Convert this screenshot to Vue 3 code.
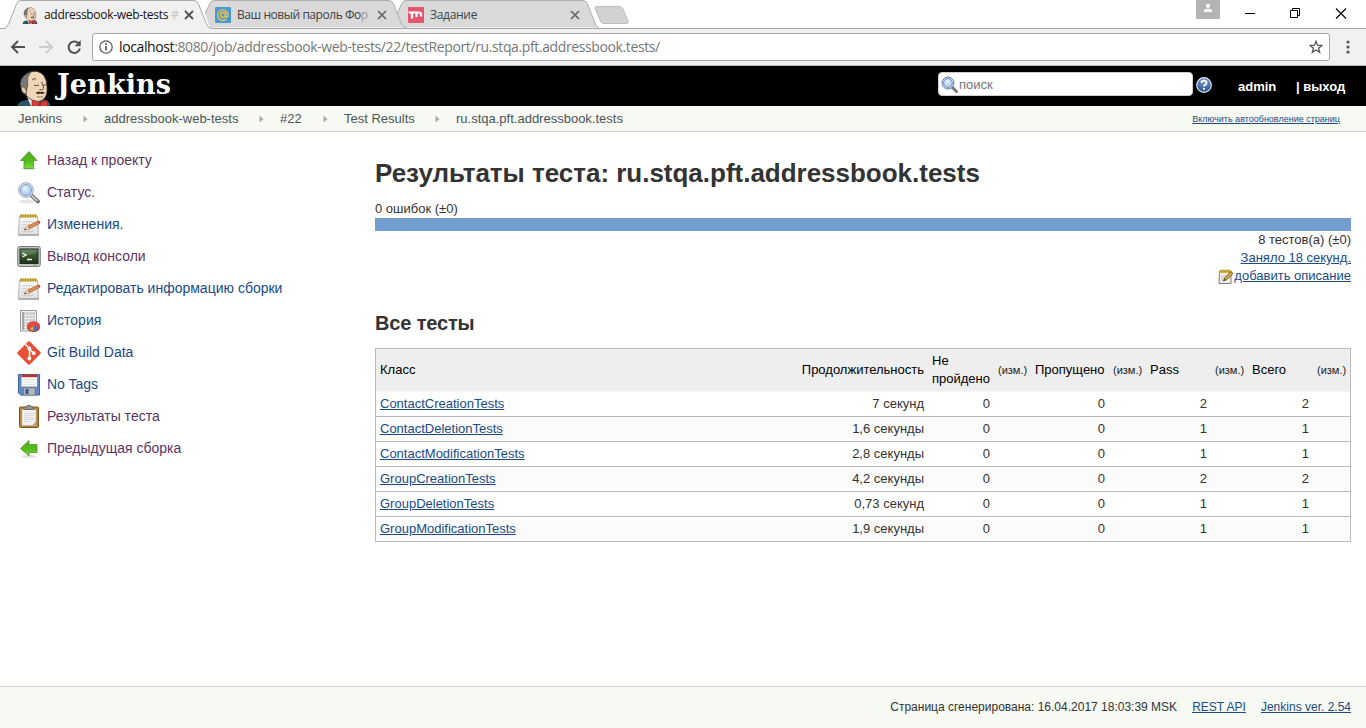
<script setup>
const crumbs = [
  { t: 'Jenkins', c: 'c1' },
  { t: 'addressbook-web-tests', c: 'c2' },
  { t: '#22', c: 'c3' },
  { t: 'Test Results', c: 'c4' },
  { t: 'ru.stqa.pft.addressbook.tests', c: 'c5' }
]
const menu = [
  { icon: 'up', t: 'Назад к проекту', v: true },
  { icon: 'search', t: 'Статус.', v: true },
  { icon: 'note', t: 'Изменения.', v: false },
  { icon: 'term', t: 'Вывод консоли', v: true },
  { icon: 'note', t: 'Редактировать информацию сборки', v: false },
  { icon: 'graph', t: 'История', v: false },
  { icon: 'git', t: 'Git Build Data', v: false },
  { icon: 'save', t: 'No Tags', v: false },
  { icon: 'clip', t: 'Результаты теста', v: true },
  { icon: 'left', t: 'Предыдущая сборка', v: true }
]
const rows = [
  ['ContactCreationTests', '7 секунд', 2],
  ['ContactDeletionTests', '1,6 секунды', 1],
  ['ContactModificationTests', '2,8 секунды', 1],
  ['GroupCreationTests', '4,2 секунды', 2],
  ['GroupDeletionTests', '0,73 секунд', 1],
  ['GroupModificationTests', '1,9 секунды', 1]
]
</script>

<template>
  <div class="screen">
    <svg class="defs" width="0" height="0" aria-hidden="true">
      <defs>
        <linearGradient id="gGreen" x1="0" y1="0" x2="0" y2="1"><stop offset="0" stop-color="#4fa61c" /><stop offset=".6" stop-color="#57bd20" /><stop offset="1" stop-color="#7fdc3c" /></linearGradient>
        <linearGradient id="gPaper" x1="0" y1="0" x2="0" y2="1"><stop offset="0" stop-color="#fafafa" /><stop offset="1" stop-color="#dedede" /></linearGradient>
        <linearGradient id="gTerm" x1="0" y1="0" x2="0" y2="1"><stop offset="0" stop-color="#5a7a50" /><stop offset=".5" stop-color="#36532f" /><stop offset="1" stop-color="#1c2f19" /></linearGradient>
        <radialGradient id="gLens" cx=".4" cy=".35" r=".7"><stop offset="0" stop-color="#e8f2fd" /><stop offset="1" stop-color="#a3c3ea" /></radialGradient>
        <radialGradient id="gHelp" cx=".5" cy=".2" r=".9"><stop offset="0" stop-color="#7aa0d4" /><stop offset="1" stop-color="#1f4585" /></radialGradient>
        <g id="jenkins-head">
          <path d="M0 38V34Q2 31 8 30L25 29Q31 31 32 34V38Z" fill="#2f5468" />
          <path d="M9 27L21 30L20 38H14Z" fill="#f0f0f0" />
          <path d="M5 14Q4 5 12 2Q20 -.5 25.500 5Q29 10 29 17Q29.500 22 28 26Q25 31.500 19 31.500Q11 30 8 25Z" fill="#f0d6b7" stroke="#3b2e25" stroke-width=".8" />
          <path d="M7 5Q9 3 13 2Q9 6 9.500 12Q10.500 15 9 18Q9 21 8 24L4 20Q1 15 3 10Q4 7 7 5Z" fill="#77787a" stroke="#3a3735" stroke-width=".6" />
          <path d="M6 17Q3 16 3.500 20Q4.500 24 8.500 24Q9 20 6 17Z" fill="#e8c8a6" stroke="#5b4535" stroke-width=".6" />
          <path d="M14 10Q15.500 8 18 9M16 15Q18 16.500 21 15M24.500 15Q26 16 28 14.500M23.500 12Q26.500 18 25 19.500Q23 20.500 21.500 19.500" fill="none" stroke="#493a30" stroke-width=".9" />
          <path d="M17.500 23Q20 20.500 22.500 22Q25 21 27 23Q24 24.500 22 23.500Q20 25 17.500 23Z" fill="#403028" />
          <path d="M19 26.500Q22 28 25 26.500" fill="none" stroke="#8a5d48" stroke-width=".8" />
          <path d="M14 30.500Q17 30 20.500 33L22.500 33Q26 30 29.500 30.500V37H25L22 35.500L18 37H14Z" fill="#dc3b36" stroke="#8b1f1c" stroke-width=".6" />
          <path d="M20 32.300H23V36H20Z" fill="#b32824" />
        </g>
      </defs>
    </svg>

    <div class="tabs">
      <div class="tab t1">
        <svg class="shape" width="208" height="29" viewBox="0 0 208 29"><path d="M0 28.500Q3 28 4.500 24L12.500 4Q14 .5 17 .5H190Q193 .5 194.500 4L202.500 24Q204 28 208 28.500V29H0Z" fill="#f1f1f1" /><path d="M0 28.500Q3 28 4.500 24L12.500 4Q14 .5 17 .5H190Q193 .5 194.500 4L202.500 24Q204 28 208 28.500" fill="none" stroke="#a9a9a9" /></svg>
        <svg class="fav" width="16" height="17" viewBox="0 0 32 38"><use href="#jenkins-head" /></svg>
        <span class="tt a">addressbook-web-tests <i>#</i></span>
        <svg class="x" width="10" height="10" viewBox="0 0 10 10"><path d="M1 1L9 9M9 1L1 9" stroke="#505050" stroke-width="1.800" /></svg>
      </div>
      <div class="tab t2">
        <svg class="shape" width="202" height="28" viewBox="0 0 202 28"><path d="M0 14L4.500 4Q6 .5 9 .5H184Q187 .5 188.500 4L196.500 24Q198 27.500 202 27.500H5Z" fill="#d9d9d9" /><path d="M0 14L4.500 4Q6 .5 9 .5H184Q187 .5 188.500 4L196.500 24Q198 27.500 202 27.500" fill="none" stroke="#b0b0b0" /></svg>
        <svg class="fav" width="16" height="16" viewBox="0 0 16 16"><rect width="16" height="16" rx="1" fill="#469bd5" /><circle cx="8" cy="8" r="2.400" fill="none" stroke="#f2be4a" stroke-width="1.500" /><path d="M10.600 5.500V9.300Q12 11 13 8.500A5.200 5.200 0 1 0 11.300 12.100" fill="none" stroke="#f2be4a" stroke-width="1.400" /></svg>
        <span class="tt b">Ваш новый пароль Фо<i>р</i></span>
        <svg class="x" width="10" height="10" viewBox="0 0 10 10"><path d="M1 1L9 9M9 1L1 9" stroke="#666" stroke-width="1.700" /></svg>
      </div>
      <div class="tab t3">
        <svg class="shape" width="202" height="28" viewBox="0 0 202 28"><path d="M0 14L4.500 4Q6 .5 9 .5H186Q189 .5 190.500 4L198.500 24Q199.500 27.500 202 27.500H5Z" fill="#d9d9d9" /><path d="M0 14L4.500 4Q6 .5 9 .5H186Q189 .5 190.500 4L198.500 24Q199.500 27.500 202 27.500" fill="none" stroke="#b0b0b0" /></svg>
        <svg class="fav" width="16" height="16" viewBox="0 0 16 16"><rect width="16" height="16" rx="1" fill="#e4566e" /><path d="M4 11.500V7L2.200 5.500H11Q13 5.500 13 7V9.500M8.500 5.500V10" fill="none" stroke="#fff" stroke-width="2.200" /></svg>
        <span class="tt c">Задание</span>
        <svg class="x" width="10" height="10" viewBox="0 0 10 10"><path d="M1 1L9 9M9 1L1 9" stroke="#666" stroke-width="1.700" /></svg>
      </div>
      <svg class="newtab" width="36" height="18" viewBox="0 0 36 18"><path d="M3 .5H25Q28 .5 29 3L34 15Q35 17.500 32 17.500H10Q7.500 17.500 6.500 15L1 2.500Q.5 .5 3 .5Z" fill="#d2d2d2" stroke="#bcbcbc" /></svg>
      <div class="win">
        <svg width="24" height="19" viewBox="0 0 24 19"><path d="M0 0H24V19H0Z" fill="#b3b3b3" /><circle cx="12" cy="5.800" r="2.100" fill="#fff" /><path d="M8 12V10.500Q8 8.700 12 8.700T16 10.500V12Z" fill="#fff" /></svg>
        <svg class="ctl" width="100" height="12" viewBox="0 0 100 12"><path d="M0 6.500H10" stroke="#000" /><path d="M45.500 3.500H52.500V10.500H45.500ZM47.500 3.500V1.500H54.500V8.500H52.500" fill="none" stroke="#000" /><path d="M91 1.500L101 11.500M101 1.500L91 11.500" stroke="#000" stroke-width="1.100" /></svg>
      </div>
    </div>

    <div class="bar">
      <svg class="nav" width="74" height="18" viewBox="0 0 74 18"><path d="M15 9H2M8 3L2 9L8 15" fill="none" stroke="#505050" stroke-width="1.900" /><path d="M29 9H42M36 3L42 9L36 15" fill="none" stroke="#ccc" stroke-width="1.900" /><path d="M68.500 5.300A5.700 5.700 0 1 0 69.900 10.500" fill="none" stroke="#505050" stroke-width="2" /><path d="M70.700 2V8.200H64.500Z" fill="#505050" /></svg>
      <div class="url">
        <svg width="14" height="14" viewBox="0 0 14 14"><circle cx="7" cy="7" r="6.200" fill="none" stroke="#5a5a5a" stroke-width="1.300" /><path d="M7 6V10.600M7 3.200V4.900" stroke="#5a5a5a" stroke-width="1.700" /></svg>
        <span class="addr"><b>localhost</b>:8080/job/addressbook-web-tests/22/testReport/ru.stqa.pft.addressbook.tests/</span>
        <svg width="14" height="14" viewBox="0 0 14 14"><path d="M7 1.300L8.600 5.200L12.900 5.500L9.600 8.200L10.700 12.400L7 10L3.300 12.400L4.400 8.200L1.100 5.500L5.400 5.200Z" fill="none" stroke="#555" stroke-width="1.300" /></svg>
      </div>
      <svg class="dots" width="4" height="14" viewBox="0 0 4 14"><circle cx="2" cy="2" r="1.600" fill="#555" /><circle cx="2" cy="7" r="1.600" fill="#555" /><circle cx="2" cy="12" r="1.600" fill="#555" /></svg>
    </div>

    <header class="head">
      <svg class="logo" width="33" height="36" viewBox="0 0 33 36"><use href="#jenkins-head" /></svg>
      <span class="brand">Jenkins</span>
      <div class="search">
        <svg width="17" height="17" viewBox="0 0 17 17"><path d="M11 11L15.500 15.500" stroke="#777" stroke-width="3" stroke-linecap="round" /><circle cx="7" cy="7" r="6" fill="#dce4ee" stroke="#657a98" /><circle cx="7" cy="7" r="4.400" fill="url(#gLens)" stroke="#7395c8" /></svg>
        <span>поиск</span>
      </div>
      <svg class="help" width="16" height="16" viewBox="0 0 16 16"><circle cx="8" cy="8" r="7.300" fill="url(#gHelp)" stroke="#dce6f3" stroke-width="1.200" /><path d="M5.500 6Q5.500 3.700 8 3.700T10.500 5.900Q10.500 7.200 9 7.900Q8 8.400 8 9.500M8 11V12.700" fill="none" stroke="#fff" stroke-width="1.800" /></svg>
      <span class="user">admin</span>
      <span class="logout">| выход</span>
    </header>

    <nav class="crumbs">
      <template v-for="(c, i) in crumbs" :key="c.t">
        <svg v-if="i" class="arr" width="5" height="8" viewBox="0 0 5 8"><path d="M.5 .5L4.500 4L.5 7.500Z" fill="#aaa" /></svg>
        <span :class="['crumb', c.c]">{{ c.t }}</span>
      </template>
      <a class="auto">Включить автообновление страниц</a>
    </nav>

    <div class="body">
      <aside class="side">
        <div v-for="m in menu" :key="m.t" class="task">
          <svg width="24" height="24" viewBox="0 0 24 24">
            <g v-if="m.icon === 'up'"><ellipse cx="12" cy="19.500" rx="8" ry="1.500" fill="#ddd" /><path d="M12 2.500L20 11.500H16.500V19.500H7V11.500H3.500Z" fill="url(#gGreen)" stroke="#4a9b24" stroke-width=".8" /></g>
            <g v-else-if="m.icon === 'left'"><ellipse cx="12" cy="19.500" rx="8" ry="1.500" fill="#e2e2e2" /><path d="M3.500 11.500L12 3.500V7.500H20V15.500H12V19Z" fill="url(#gGreen)" stroke="#4a9b24" stroke-width=".8" /></g>
            <g v-else-if="m.icon === 'search'"><ellipse cx="10" cy="20.500" rx="8" ry="2" fill="#e6e6e6" /><path d="M14 14L21 20.500" stroke="#777" stroke-width="4" stroke-linecap="round" /><path d="M14 14L20 19.500" stroke="#c4c4c4" stroke-width="1.800" stroke-linecap="round" /><circle cx="9" cy="9" r="7.300" fill="#e9edf2" stroke="#8c9aae" stroke-width=".9" /><circle cx="9" cy="9" r="5.500" fill="url(#gLens)" stroke="#6f96cc" stroke-width=".9" /></g>
            <g v-else-if="m.icon === 'note'"><path d="M2.500 3.500H20.500L21.500 21.500H1.500Z" fill="url(#gPaper)" stroke="#b5b5b0" /><path d="M1 22.300H22" stroke="#8b8b88" stroke-width=".8" /><path d="M3 3H20" stroke="#d1b43b" stroke-width="3" /><path d="M3.500 1.500V4.500M6 1.500V4.500M8.500 1.500V4.500M11 1.500V4.500M13.500 1.500V4.500M16 1.500V4.500M18.500 1.500V4.500" stroke="#8e7a28" stroke-width=".7" /><path d="M5 8.500H17M5 11.500H14M5 14.500H10M5 18.500H17" stroke="#c9c9c9" stroke-width=".8" /><path d="M7 17L10.500 13.300L21 8L22.500 10.500L12 16Z" fill="#dd914b" stroke="#895a33" stroke-width=".7" /><path d="M7 17L10.500 13.300L12 16Z" fill="#ead7b5" /><path d="M20 8.500L22.500 7.500L23.500 9.500L21.500 11Z" fill="#d65b55" /><path d="M7 17L8.500 15.500L9.200 16.500Z" fill="#222" /></g>
            <g v-else-if="m.icon === 'term'"><rect x=".7" y="1.500" width="22.600" height="20" rx="2" fill="#c3c4c0" stroke="#7b7e78" /><rect x="3" y="4" width="18" height="14.500" fill="url(#gTerm)" stroke="#20281e" /><path d="M3.500 11Q14 11 20.500 6V4.500H3.500Z" fill="#8eaa83" opacity=".3" /><path d="M5.500 8L9 10L5.500 12M10 14.500H15" fill="none" stroke="#f3f7ef" stroke-width="1.300" /><path d="M16 20H20" stroke="#74a45e" /></g>
            <g v-else-if="m.icon === 'graph'"><rect x="3.500" y="1.500" width="16" height="20.500" fill="#f3f3f3" stroke="#9c9c9c" /><path d="M5 3H18V20.500H5Z" fill="#c6c6c6" /><path d="M5 6.500H18M5 9.500H18M5 12.500H18M5 15.500H18M5 18.500H18M9 3V20.500M12 3V20.500M15 3V20.500" stroke="#f2f2f2" stroke-width=".8" /><path d="M6 3V20.500" stroke="#999" stroke-width="1.600" /><ellipse cx="16.500" cy="18" rx="6.500" ry="5" fill="#b32a26" /><ellipse cx="16.500" cy="16.800" rx="6.300" ry="4.500" fill="#e44b43" /><path d="M16.500 17L20.500 17.500L20 21.500L16.500 22Z" fill="#486fb4" /><path d="M16.500 17L16.500 22Q13 21.700 12.500 20Z" fill="#ddad36" /></g>
            <g v-else-if="m.icon === 'git'"><path d="M10.900 .8Q12 -.2 13.100 .8L23.300 10.900Q24.300 12 23.300 13.100L13.100 23.300Q12 24.300 10.900 23.300L.7 13.100Q-.3 12 .7 10.900Z" fill="#e94e36" /><path d="M8.500 3.500L12.500 7.500V17.500M12.500 8L16.500 12" fill="none" stroke="#fff" stroke-width="1.500" /><circle cx="12.300" cy="7.500" r="1.900" fill="#fff" /><circle cx="12.300" cy="17.500" r="1.900" fill="#fff" /><circle cx="16.700" cy="12.200" r="1.900" fill="#fff" /></g>
            <g v-else-if="m.icon === 'save'"><rect x=".5" y=".5" width="23" height="23" fill="#f0f1f5" /><path d="M2 1.500H22.500V22H4L1.500 20V1.500Z" fill="#6288c2" stroke="#43659c" /><rect x="4.500" y="2" width="15.500" height="11.500" fill="#fafafa" /><path d="M4.500 3H20" stroke="#cb2c2c" stroke-width="2.400" /><path d="M6 6.500H18.500M6 9H18.500M6 11.500H18.500" stroke="#ddd" stroke-width=".8" /><rect x="6.500" y="15" width="11.500" height="7" fill="#b5b8bd" stroke="#777" stroke-width=".7" /><rect x="8.500" y="16" width="3" height="5" fill="#395681" /></g>
            <g v-else><rect x="2.500" y="2" width="19" height="20.500" rx="1" fill="#b88331" stroke="#805816" /><rect x="5" y="4.500" width="14" height="16" fill="#f1f1f1" stroke="#b8b8b0" stroke-width=".7" /><path d="M7 8.500H17M7 10.500H17M7 12.500H16M7 14.500H17M7 16.500H13" stroke="#d2d2d2" stroke-width=".8" /><path d="M19 16.500L15 20.500H19Z" fill="#a4a49e" /><path d="M7 4.500V3Q7 2 9 2Q9.500 .3 12 .3T15 2Q17 2 17 3V4.500Z" fill="#92948f" stroke="#5d5f59" stroke-width=".8" /></g>
          </svg>
          <a :class="{ visited: m.v }">{{ m.t }}</a>
        </div>
      </aside>

      <main class="main">
        <h1>Результаты теста: ru.stqa.pft.addressbook.tests</h1>
        <div class="fails">0 ошибок (±0)</div>
        <div class="progress"></div>
        <div class="sum">
          <div>8 тестов(а) (±0)</div>
          <div><a class="took">Заняло 18 секунд.</a></div>
          <div class="desc">
            <svg width="16" height="16" viewBox="0 0 16 16"><path d="M1.500 2H13V14.500H1Z" fill="#f0eee6" stroke="#807f73" /><path d="M1.500 1H13V4H1.500Z" fill="#e2c342" /><path d="M3 .5V3.500M5 .5V3.500M7 .5V3.500M9 .5V3.500M11 .5V3.500" stroke="#877326" stroke-width=".7" /><path d="M3 7H10M3 9H8M3 11H6" stroke="#bbb" stroke-width=".8" /><path d="M5.500 12L7 8.500L12.800 2.500L15 4.500L9 10.500Z" fill="#cfa548" stroke="#695022" stroke-width=".8" /><path d="M5.500 12L6.500 10L7.500 11Z" fill="#222" /></svg><a class="add">добавить описание</a>
          </div>
        </div>
        <h2>Все тесты</h2>
        <div class="table">
          <div class="row th">
            <span>Класс</span><span class="r dur">Продолжительность</span><span class="np">Не пройдено</span><small>(изм.)</small><span class="pr">Пропущено</span><small>(изм.)</small><span>Pass</span><small>(изм.)</small><span class="vs">Всего</span><small>(изм.)</small>
          </div>
          <div v-for="r in rows" :key="r[0]" class="row">
            <span><a>{{ r[0] }}</a></span><span class="r secs">{{ r[1] }}</span><span class="r">0</span><span></span><span class="r">0</span><span></span><span class="r">{{ r[2] }}</span><span></span><span class="r">{{ r[2] }}</span><span></span>
          </div>
        </div>
      </main>
    </div>

    <footer class="foot">
      <span class="gen">Страница сгенерирована: 16.04.2017 18:03:39 MSK</span>
      <a class="rest">REST API</a>
      <a class="ver">Jenkins ver. 2.54</a>
    </footer>
  </div>
</template>

<style>
html, body { margin: 0; overflow: hidden; }
</style>
<style scoped>
.screen { width: 1366px; height: 728px; display: flex; flex-direction: column; background: #fff; color: #333; font: 13px/18px "Liberation Sans", Arial, sans-serif; overflow: hidden; white-space: nowrap; }
.screen * { box-sizing: border-box; }
.defs { position: absolute; }
svg { flex: none; display: block; }
a { color: #204a87; text-decoration: underline; text-underline-offset: 1px; }

.tabs { height: 29px; flex: none; display: flex; align-items: flex-start; border-bottom: 1px solid #a9a9a9; font-family: "Open Sans", "Noto Sans", sans-serif; font-size: 12px; }
.tab { position: relative; height: 29px; display: flex; align-items: center; flex: none; }
.shape { position: absolute; left: 0; top: 0; }
.fav, .tt, .x { position: relative; }
.x { margin-left: auto; }
.t1 { width: 208px; margin-left: 4px; padding: 1px 18px 0 18px; z-index: 2; }
.t2 { width: 202px; height: 28px; margin-left: -7px; padding: 2px 20px 0 10px; z-index: 1; }
.t3 { width: 202px; height: 28px; margin-left: -10px; padding: 2px 19px 0 11px; }
.tt { margin-left: 6px; color: #444; letter-spacing: -.3px; }
.tt.b { letter-spacing: -.45px; }
.t1 .tt { color: #111; }
.tt i { font-style: normal; color: #c5c5c5; }
.tt.b i { color: #999; }
.newtab { margin: 6px 0 0 -5px; }
.win { margin-left: auto; display: flex; }
.ctl { margin: 7px 21px 0 25px; overflow: visible; }

.bar { height: 37px; flex: none; background: #f1f1f1; border-bottom: 1px solid #b6b6b6; display: flex; align-items: center; }
.nav { margin-left: 10px; }
.url { margin-left: 8px; width: 1238px; height: 28px; border: 1px solid #a9a9a9; border-radius: 3px; background: #fff; display: flex; align-items: center; padding: 0 6px; font: 14px/20px "Open Sans", "Noto Sans", sans-serif; color: #777; }
.addr { margin: 0 auto 0 6px; letter-spacing: -.385px; }
.addr b { font-weight: 400; color: #111; }
.dots { margin-left: 16px; }

.head { height: 40px; flex: none; background: #000; display: flex; align-items: flex-start; color: #fff; }
.logo { margin: 4px 0 0 18px; }
.brand { width: 117px; margin-left: 6px; font: bold 27px/37px "DejaVu Serif", serif; letter-spacing: .1px; }
.search { width: 255px; height: 24px; margin: 6px 0 0 764px; background: #fff; border-radius: 4px; border: 1px solid #ccc; display: flex; align-items: center; padding-left: 2px; color: #757575; }
.search span { margin: 2px 0 0 1px; }
.help { margin: 11px 0 0 3px; }
.user { margin: 12px 0 0 26px; width: 58px; font-weight: bold; }
.logout { margin-top: 12px; font-weight: bold; }

.crumbs { height: 26px; flex: none; background: #f6faf2; border-bottom: 1px solid #d3d7cf; display: flex; align-items: center; color: #4d545d; }
.crumb { flex: none; }
.arr { margin-right: 16px; }
.c1 { margin-left: 18px; width: 65px; }
.c2 { width: 155px; }
.c3 { width: 43px; }
.c4 { width: 91px; }
.auto { margin-left: auto; margin-right: 26px; font-size: 9px; }

.body { flex: 1; display: flex; min-height: 0; }
.side { width: 375px; flex: none; padding-top: 12px; }
.task { height: 32px; display: flex; align-items: center; padding-left: 17px; font-size: 14px; }
.task svg { margin-top: 2px; }
.task a { margin-left: 6px; text-decoration: none; }
.task a.visited { color: #5c3566; }
.main { width: 976px; }
h1 { margin: 25px 0 0; font-size: 26px; line-height: 32px; letter-spacing: -.015px; }
.fails { margin-top: 11px; }
.progress { height: 13px; background: #729fcf; }
.sum { text-align: right; }
.desc { display: flex; justify-content: flex-end; }
.desc svg { margin-top: 2px; }
h2 { margin: 26px 0 0; font-size: 20px; line-height: 24px; letter-spacing: -.15px; }
.table { margin-top: 13px; border: 1px solid #bbb; border-bottom: 0; }
.row { display: grid; grid-template-columns: 421px 131px 66px 37px 78px 37px 65px 37px 65px 37px; height: 25px; align-items: center; border-bottom: 1px solid #bbb; }
.row > * { padding: 0 4px; }
.row:nth-child(odd) { background: #fbfbfb; }
.row.th { height: 43px; background: #eee; border-bottom: 1px solid #f7f7f7; color: #000; }
.r { text-align: right; }
.np { white-space: normal; }
small { font-size: 11px; color: #222; margin-top: -1px; }

.foot { height: 42px; flex: none; background: #f6faf2; border-top: 1px solid #d3d7cf; display: flex; justify-content: flex-end; align-items: center; padding: 0 15px 2px 0; font-size: 12px; }
.foot a { margin-left: 15px; }
</style>
